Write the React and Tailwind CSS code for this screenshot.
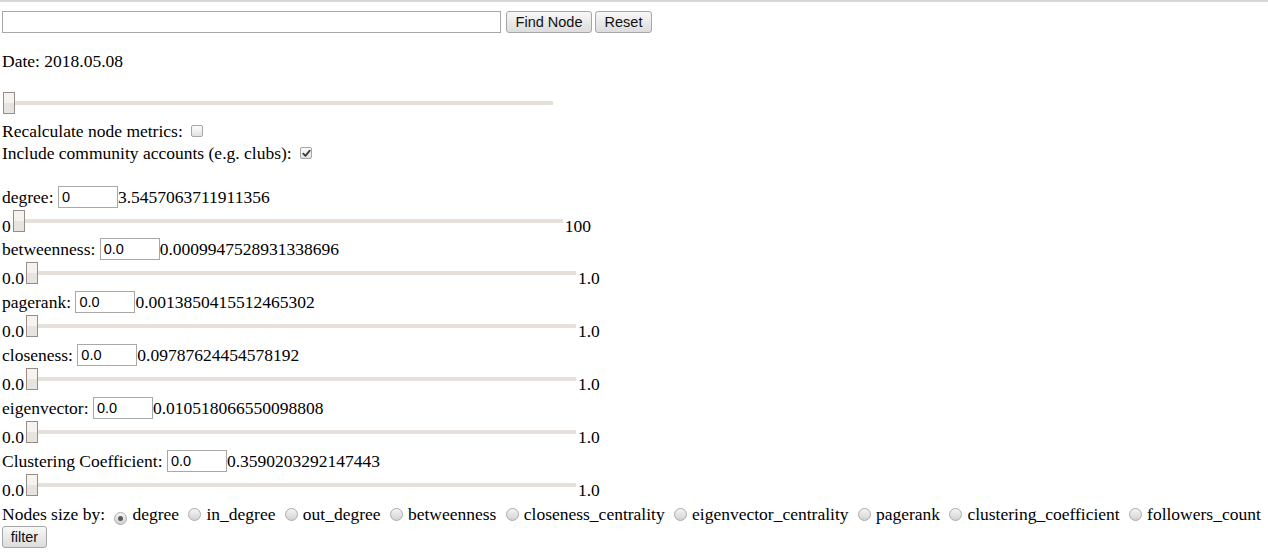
import React from "react";

function Slider({ w = "w-[550px]", extra = "" }) {
  return (
    <div className={`relative h-[22px] shrink-0 ${w} ${extra}`}>
      <div className="absolute left-0 right-0 top-[9px] h-[4px] bg-[#e6e0da]" />
      <div className="absolute left-0 top-0 w-[12px] h-[22px] border border-[#958d86] bg-[linear-gradient(to_bottom,#f5f2ef_50%,#e7e3df_50%)]" />
    </div>
  );
}

function Checkbox({ checked }) {
  return (
    <span className="relative inline-flex items-center justify-center w-[12px] h-[12px] ml-[4px] mr-[3px] rounded-[2px] border border-[#a6a6a6] bg-[linear-gradient(to_bottom,#fcfcfc,#e2e2e2)]">
      {checked && (
        <svg viewBox="0 0 10 10" className="w-[9px] h-[9px]">
          <path d="M1.5 5.2 L3.8 7.6 L8.6 1.8" fill="none" stroke="#3a3a3a" strokeWidth="2" strokeLinecap="round" strokeLinejoin="round" />
        </svg>
      )}
    </span>
  );
}

function Radio({ checked }) {
  return (
    <span className="inline-flex items-center justify-center w-[13px] h-[13px] ml-[5px] mr-[5px] rounded-full border border-[#ababab] bg-[linear-gradient(to_bottom,#f5f5f5,#d2d2d2)] align-[-1px]">
      {checked && <span className="w-[5px] h-[5px] rounded-full bg-[#5a5a5a]" />}
    </span>
  );
}

function NumInput({ value }) {
  return (
    <div className="w-[60px] h-[22px] shrink-0 border border-[#a8a8a8] bg-white pl-[3px] font-['Liberation_Sans'] text-[14.5px] leading-[20px] text-black">
      {value}
    </div>
  );
}

function Metric({ label, value, min, max, gap }) {
  return (
    <div className={gap}>
      <div className="flex items-center h-[22px] whitespace-pre">
        <span>{label}: </span>
        <NumInput value={min === "0" ? "0" : "0.0"} />
        <span>{value}</span>
      </div>
      <div className="flex items-end h-[28px]">
        <span>{min}</span>
        <Slider extra="mx-[2px] mb-[4px]" />
        <span>{max}</span>
      </div>
    </div>
  );
}

const metrics = [
  { label: "degree", value: "3.5457063711911356", min: "0", max: "100" },
  { label: "betweenness", value: "0.0009947528931338696", min: "0.0", max: "1.0" },
  { label: "pagerank", value: "0.0013850415512465302", min: "0.0", max: "1.0" },
  { label: "closeness", value: "0.09787624454578192", min: "0.0", max: "1.0" },
  { label: "eigenvector", value: "0.010518066550098808", min: "0.0", max: "1.0" },
  { label: "Clustering Coefficient", value: "0.3590203292147443", min: "0.0", max: "1.0" },
];

const sizeOpts = [
  "degree",
  "in_degree",
  "out_degree",
  "betweenness",
  "closeness_centrality",
  "eigenvector_centrality",
  "pagerank",
  "clustering_coefficient",
  "followers_count",
];

const btn =
  "h-[22px] shrink-0 flex items-center justify-center rounded-[3px] border border-[#a6a6a6] bg-[linear-gradient(to_bottom,#f8f8f8,#dcdcdc)] font-['Liberation_Sans'] text-[14.5px] text-[#111]";

export default function App() {
  return (
    <div className="w-[1268px] h-[553px] overflow-hidden bg-white text-black font-['Liberation_Serif',serif] text-[17.5px] leading-[20px]">
      <div className="h-[2px] bg-[#d8d8d8]" />
      <div className="px-[2px]">
        <div className="mt-[9px] flex items-center h-[22px]">
          <div className="w-[499px] h-[22px] border border-[#a8a8a8] bg-white" />
          <div className={`${btn} ml-[5px] w-[86px]`}>Find Node</div>
          <div className={`${btn} ml-[3px] w-[57px]`}>Reset</div>
        </div>
        <div className="mt-[18px] h-[20px]">Date: 2018.05.08</div>
        <Slider extra="mt-[21px] ml-[1px]" />
        <div className="mt-[7px] h-[20px] flex items-center whitespace-pre">
          <span>Recalculate node metrics: </span>
          <Checkbox />
        </div>
        <div className="mt-[2px] h-[20px] flex items-center whitespace-pre">
          <span>Include community accounts (e.g. clubs): </span>
          <Checkbox checked />
        </div>
        <div className="mt-[23px]">
          {metrics.map((m, i) => (
            <Metric key={m.label} {...m} gap={i === 0 ? "" : i === 1 ? "mt-[2px]" : "mt-[3px]"} />
          ))}
        </div>
        <div className="mt-[4px] h-[20px] whitespace-pre">
          <span>Nodes size by:</span>
          {sizeOpts.map((o, i) => (
            <React.Fragment key={o}>
              {" "}
              <Radio checked={i === 0} />
              <span>{o}</span>
            </React.Fragment>
          ))}
        </div>
        <div className={`${btn} mt-[2px] w-[45px] h-[21px]`}>filter</div>
      </div>
    </div>
  );
}
